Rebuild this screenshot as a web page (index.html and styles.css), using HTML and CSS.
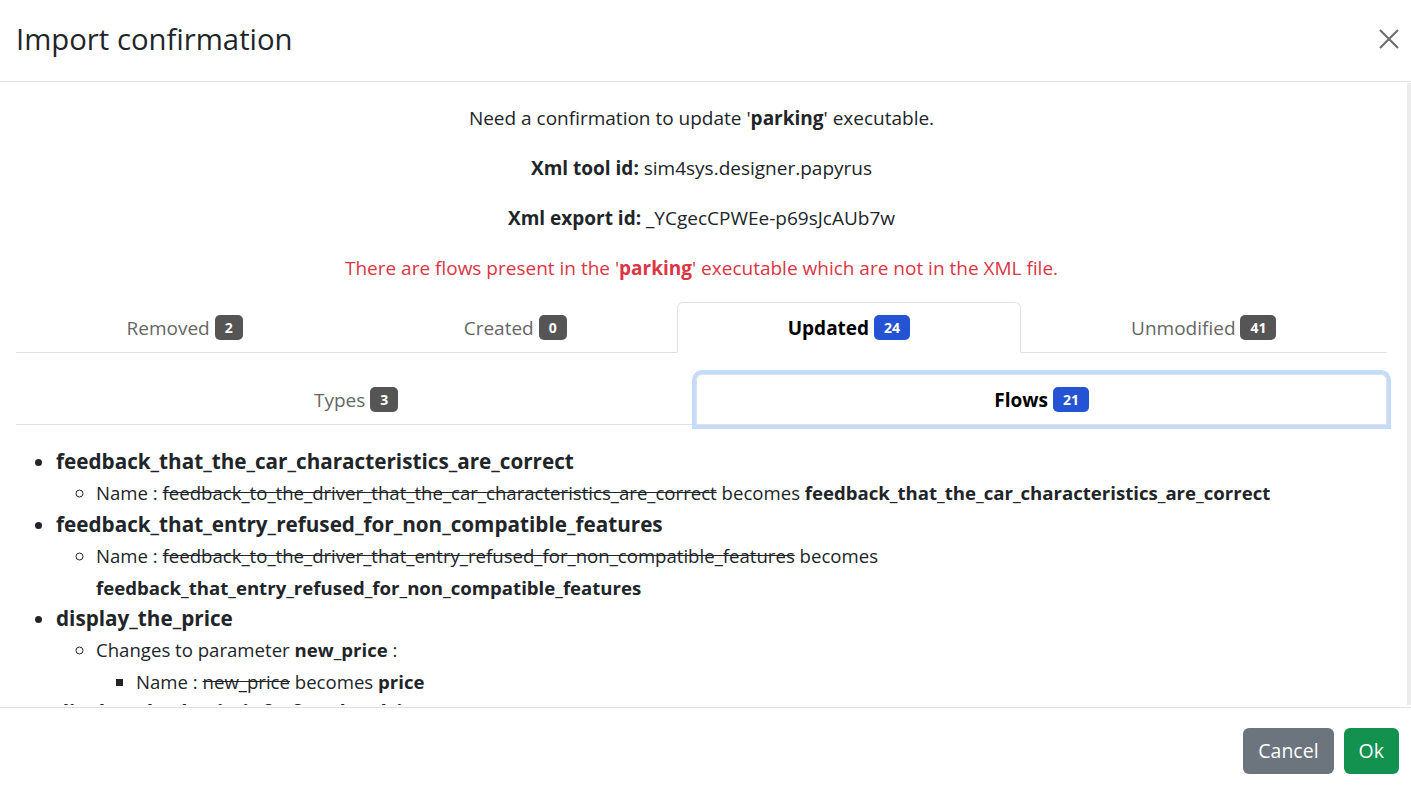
FILE: index.html
```html
<!DOCTYPE html>
<html lang="en">

<head>
    <meta charset="UTF-8">
    <meta name="viewport" content="width=device-width, initial-scale=1.0">
    <title>Import confirmation</title>
    <link rel="stylesheet" href="styles.css">
</head>

<body>
    <div class="modal">
        <div class="modal-header">
            <h2 class="modal-title">Import confirmation</h2>
            <button class="btn-close" aria-label="Close">
                <svg width="20" height="20" viewBox="0 0 20 20"><path d="M1 1L19 19M19 1L1 19" stroke="#6f6f6f" stroke-width="2.2" fill="none"/></svg>
            </button>
        </div>

        <div class="modal-body">
            <p>Need a confirmation to update '<b>parking</b>' executable.</p>
            <p><b>Xml tool id:</b> sim4sys.designer.papyrus</p>
            <p><b>Xml export id:</b> _YCgecCPWEe-p69sJcAUb7w</p>
            <p class="danger">There are flows present in the '<b>parking</b>' executable which are not in the XML file.</p>

            <!-- onglets principaux -->
            <ul class="tabs">
                <li class="tab">Removed <span class="badge">2</span></li>
                <li class="tab">Created <span class="badge">0</span></li>
                <li class="tab active">Updated <span class="badge blue">24</span></li>
                <li class="tab">Unmodified <span class="badge">41</span></li>
            </ul>

            <!-- sous-onglets de "Updated" -->
            <ul class="tabs sub">
                <li class="tab">Types <span class="badge">3</span></li>
                <li class="tab active focus">Flows <span class="badge blue">21</span></li>
            </ul>

            <ul class="flows">
                <li>feedback_that_the_car_characteristics_are_correct
                    <ul>
                        <li>Name : <del>feedback_to_the_driver_that_the_car_characteristics_are_correct</del> becomes <b>feedback_that_the_car_characteristics_are_correct</b></li>
                    </ul>
                </li>
                <li>feedback_that_entry_refused_for_non_compatible_features
                    <ul>
                        <li>Name : <del>feedback_to_the_driver_that_entry_refused_for_non_compatible_features</del> becomes <b>feedback_that_entry_refused_for_non_compatible_features</b></li>
                    </ul>
                </li>
                <li>display_the_price
                    <ul>
                        <li>Changes to parameter <b>new_price</b> :
                            <ul>
                                <li>Name : <del>new_price</del> becomes <b>price</b></li>
                            </ul>
                        </li>
                    </ul>
                </li>
                <li>display_the_basic_info_for_the_driver
                    <ul>
                        <li>Name : <del>display_basic_info</del> becomes <b>display_the_basic_info_for_the_driver</b></li>
                    </ul>
                </li>
            </ul>
        </div>

        <div class="modal-footer">
            <button class="btn grey">Cancel</button>
            <button class="btn green">Ok</button>
        </div>
    </div>
</body>

</html>
```

FILE: styles.css
```css
*{
    box-sizing: border-box;
}
body{
    margin: 0;
    font-family: "Open Sans", "Noto Sans", sans-serif;
    color: #212529;
    background: #fff;
}
.modal{
    height: 100vh;
    display: flex;
    flex-direction: column;
}
.modal-header{
    height: 82px;
    flex-shrink: 0;
    display: flex;
    align-items: center;
    justify-content: space-between;
    padding: 0 12px 4px 16px;
    border-bottom: 1px solid #dee2e6;
}
.modal-title{
    margin: 0;
    font-size: 29.3px;
    font-weight: 400;
}
.btn-close{
    border: 0;
    background: none;
    padding: 0;
    width: 20px;
    height: 20px;
    margin-top: 0;
    cursor: pointer;
}
/* la barre de droite imite la barre de défilement fine */
.modal-body{
    flex: 1;
    overflow: hidden;
    padding: 22px 20px 0 16px;
    font-size: 19px;
    border-right: 4px solid #ececec;
    margin: 1px 0 2px;
}
.modal-body p{
    margin: 0 0 23px;
    line-height: 27px;
    text-align: center;
}
.modal-body b{
    font-weight: 700;
}
.modal-body p.danger{
    color: #dc3545;
    margin-bottom: 20px;
}

/* onglets */
.tabs{
    list-style: none;
    margin: 0;
    padding: 0;
    display: flex;
    border-bottom: 1px solid #dee2e6;
}
.tab{
    flex: 1 1 auto;
    text-align: center;
    height: 51px;
    line-height: 50px;
    color: #666;
    border: 1px solid transparent;
    border-radius: 6px 6px 0 0;
    margin-bottom: -1px;
    font-size: 19px;
}
.tab.active{
    color: #000;
    font-weight: 700;
    background: #fff;
    border-color: #dee2e6 #dee2e6 #fff;
}
.tabs.sub{
    margin-top: 21px;
}
.tab.focus{
    border-color: #dee2e6;
    box-shadow: 0 0 0 4px #c5dbfb;
}
.badge{
    display: inline-block;
    vertical-align: 2px;
    font-size: 14px;
    font-weight: 700;
    line-height: 1;
    padding: 6px 10px 5px;
    border-radius: 5px;
    color: #fff;
    background: #555;
}
.badge.blue{
    background: #2453d4;
}

/* liste des flows */
.flows{
    margin: 21px 0 0;
    padding-left: 40px;
    list-style: disc;
}
.flows > li{
    font-size: 20.7px;
    font-weight: 700;
    line-height: 31.4px;
}
.flows ul{
    padding-left: 40px;
    margin: 0;
    list-style: circle;
    font-size: 18.6px;
    font-weight: 400;
    line-height: 31.4px;
}
.flows ul ul{
    list-style: square;
}
.flows del{
    text-decoration: line-through;
}

.modal-footer{
    height: 83px;
    flex-shrink: 0;
    display: flex;
    align-items: center;
    justify-content: flex-end;
    gap: 10px;
    padding: 3px 12px 0;
    border-top: 1px solid #dee2e6;
}
.btn{
    height: 46px;
    border: 0;
    border-radius: 6px;
    padding: 0 15px;
    font-family: inherit;
    font-size: 19.5px;
    color: #fff;
    cursor: pointer;
}
.btn.grey{
    background: #6c757d;
}
.btn.green{
    background: #12914f;
}
```
